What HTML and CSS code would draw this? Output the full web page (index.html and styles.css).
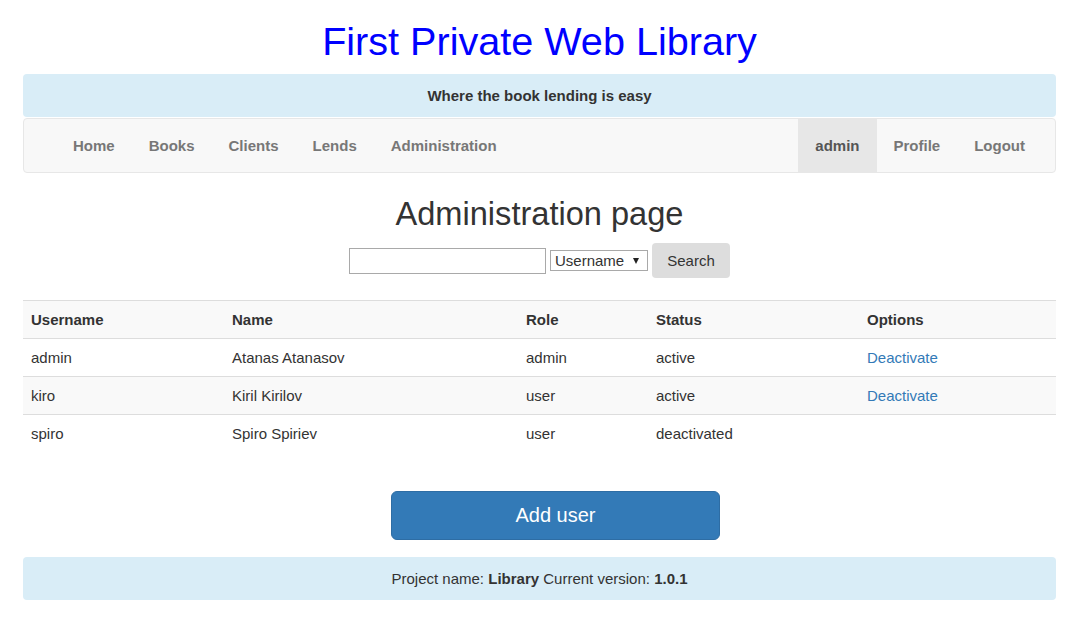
FILE: index.html
```html
<!DOCTYPE html>
<html>
<head>
<meta charset="utf-8">
<title>Administration page</title>
<link rel="stylesheet" href="styles.css">
</head>
<body>
<div class="container">
  <h1 class="site-title">First Private Web Library</h1>
  <div class="banner">Where the book lending is easy</div>
  <nav class="navbar">
    <ul class="nav">
      <li><a href="#">Home</a></li>
      <li><a href="#">Books</a></li>
      <li><a href="#">Clients</a></li>
      <li><a href="#">Lends</a></li>
      <li><a href="#">Administration</a></li>
    </ul>
    <ul class="nav nav-right">
      <li class="active"><a href="#">admin</a></li>
      <li><a href="#">Profile</a></li>
      <li><a href="#">Logout</a></li>
    </ul>
  </nav>
  <h2 class="page-title">Administration page</h2>
  <form class="search">
    <input class="search-input" type="text">
    <span class="select-wrap"><select class="search-select"><option>Username</option><option>Name</option></select></span>
    <button class="search-btn" type="button">Search</button>
  </form>
  <table class="users">
    <tbody>
      <tr class="head">
        <th class="c1">Username</th>
        <th class="c2">Name</th>
        <th class="c3">Role</th>
        <th class="c4">Status</th>
        <th class="c5">Options</th>
      </tr>
      <tr>
        <td>admin</td><td>Atanas Atanasov</td><td>admin</td><td>active</td><td><a href="#">Deactivate</a></td>
      </tr>
      <tr>
        <td>kiro</td><td>Kiril Kirilov</td><td>user</td><td>active</td><td><a href="#">Deactivate</a></td>
      </tr>
      <tr>
        <td>spiro</td><td>Spiro Spiriev</td><td>user</td><td>deactivated</td><td></td>
      </tr>
    </tbody>
  </table>
  <div class="actions">
    <button class="add-btn" type="button">Add user</button>
  </div>
  <div class="footer">Project name: <b>Library</b> Current version: <b>1.0.1</b></div>
</div>
</body>
</html>
```
FILE: styles.css
```css
* { box-sizing: border-box; }
body {
  margin: 8px;
  font-family: "Liberation Sans", Arial, sans-serif;
  font-size: 15px;
  line-height: 21px;
  color: #333;
  background: #fff;
}
.container { padding: 0 15px 0 15px; }
.site-title {
  margin: 12px 0 11px;
  font-size: 39.6px;
  line-height: 43px;
  font-weight: normal;
  color: #0000ff;
  text-align: center;
}
.banner {
  background: #d9edf7;
  border-radius: 4px;
  padding: 11px;
  text-align: center;
  font-weight: bold;
  color: #333;
  margin-bottom: 1px;
}
.navbar {
  display: flex;
  justify-content: space-between;
  background: #f8f8f8;
  border: 1px solid #e7e7e7;
  border-radius: 4px;
  height: 55px;
  padding: 0 13px 0 32px;
}
.nav {
  display: flex;
  list-style: none;
  margin: 0;
  padding: 0;
}
.nav a {
  display: block;
  padding: 0 17px;
  line-height: 53px;
  font-weight: bold;
  color: #777;
  text-decoration: none;
}
.nav .active a { background: #e7e7e7; color: #555; }
.page-title {
  margin: 23px 0 12px;
  font-size: 32.6px;
  line-height: 35px;
  font-weight: normal;
  text-align: center;
  color: #333;
}
.search {
  display: flex;
  justify-content: center;
  align-items: center;
  gap: 4px;
  margin: 0 0 22px;
  height: 35px;
}
.search-input {
  width: 197px;
  height: 26px;
  border: 1px solid #a9a9a9;
  padding: 2px 4px;
  font: inherit;
}
.select-wrap { position: relative; display: block; }
.select-wrap::after {
  content: "";
  position: absolute;
  right: 9px;
  top: 8px;
  border-left: 3.5px solid transparent;
  border-right: 3.5px solid transparent;
  border-top: 6px solid #222;
  pointer-events: none;
}
.search-select {
  -webkit-appearance: none;
  appearance: none;
  display: block;
  width: 98px;
  height: 21px;
  border: 1px solid #a9a9a9;
  border-radius: 0;
  background: #fff;
  padding: 0 0 0 4px;
  font-family: "Liberation Sans", Arial, sans-serif;
  font-size: 15px;
  line-height: 19px;
  color: #333;
}
.search-btn {
  width: 78px;
  height: 35px;
  border: none;
  border-radius: 4px;
  background: #dddddd;
  color: #333;
  font-family: "Liberation Sans", Arial, sans-serif;
  font-size: 15px;
}
.users {
  width: 100%;
  border-collapse: collapse;
  border-spacing: 0;
}
.users th, .users td {
  padding: 8px;
  line-height: 21px;
  border-top: 1px solid #ddd;
  text-align: left;
  vertical-align: top;
}
.users tr:nth-child(odd) { background: #f9f9f9; }
.users .c1 { width: 201px; }
.users .c2 { width: 294px; }
.users .c3 { width: 130px; }
.users .c4 { width: 211px; }
.users a { color: #337ab7; text-decoration: none; }
.actions {
  display: flex;
  justify-content: center;
  padding-left: 32px;
  margin: 39px 0 17px;
}
.add-btn {
  width: 329px;
  height: 49px;
  background: #337ab7;
  border: 1px solid #2e6da4;
  border-radius: 6px;
  color: #fff;
  font-family: "Liberation Sans", Arial, sans-serif;
  font-size: 20px;
}
.footer {
  background: #d9edf7;
  border-radius: 4px;
  padding: 11px;
  text-align: center;
  color: #333;
}
```
